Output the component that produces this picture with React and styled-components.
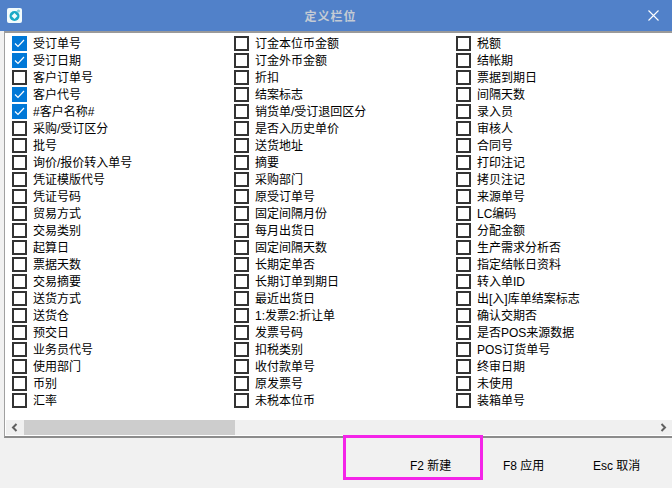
import React from "react";
import styled, { createGlobalStyle } from "styled-components";

const columns = [
  ["受订单号", "受订日期", "客户订单号", "客户代号", "#客户名称#", "采购/受订区分", "批号", "询价/报价转入单号", "凭证模版代号", "凭证号码", "贸易方式", "交易类别", "起算日", "票据天数", "交易摘要", "送货方式", "送货仓", "预交日", "业务员代号", "使用部门", "币别", "汇率"],
  ["订金本位币金额", "订金外币金额", "折扣", "结案标志", "销货单/受订退回区分", "是否入历史单价", "送货地址", "摘要", "采购部门", "原受订单号", "固定间隔月份", "每月出货日", "固定间隔天数", "长期定单否", "长期订单到期日", "最近出货日", "1:发票2:折让单", "发票号码", "扣税类别", "收付款单号", "原发票号", "未税本位币"],
  ["税额", "结帐期", "票据到期日", "间隔天数", "录入员", "审核人", "合同号", "打印注记", "拷贝注记", "来源单号", "LC编码", "分配金额", "生产需求分析否", "指定结帐日资料", "转入单ID", "出[入]库单结案标志", "确认交期否", "是否POS来源数据", "POS订货单号", "终审日期", "未使用", "装箱单号"],
];

const checked = ["受订单号", "受订日期", "客户代号", "#客户名称#"];

const GlobalStyle = createGlobalStyle`
  html, body {
    margin: 0;
    padding: 0;
    background: #f0f0f0;
  }
  body {
    font-family: "Liberation Sans", "Noto Sans CJK SC", sans-serif;
    font-size: 12px;
  }
`;

const Window = styled.div`
  position: relative;
  width: 672px;
  height: 488px;
  overflow: hidden;
  display: flex;
  flex-direction: column;
  background: #f1f1f1;
`;

const TitleBar = styled.div`
  height: 31px;
  flex: none;
  display: flex;
  align-items: center;
  justify-content: space-between;
  padding: 0 13px 0 7px;
  background: #5181c9;
`;

const Title = styled.div`
  color: #c4cbd4;
  font-size: 12px;
  font-weight: 700;
  letter-spacing: 1px;
  position: absolute;
  left: 0;
  right: 11px;
  top: 7px;
  text-align: center;
`;

const Panel = styled.div`
  margin: 0 0 0 4px;
  height: 407px;
  flex: none;
  box-sizing: border-box;
  border: 1px solid #a0a0a0;
  border-top: 2px solid #9a9a9a;
  border-bottom: 2px solid #8c8c8c;
  border-right: none;
  display: flex;
  flex-direction: column;
  background: #fff;
`;

const List = styled.div`
  flex: 1;
  display: grid;
  grid-template-columns: repeat(3, 222px);
  padding: 2px 0 0 7px;
`;

const Column = styled.div`
  display: flex;
  flex-direction: column;
`;

const Row = styled.div`
  height: 17px;
  display: flex;
  align-items: center;
  gap: 6px;
  color: #000;
  white-space: nowrap;
`;

const Label = styled.span`
  margin-bottom: 2px;
`;

const Box = styled.span`
  width: 15px;
  height: 15px;
  flex: none;
  box-sizing: border-box;
  display: flex;
  align-items: center;
  justify-content: center;
  border: ${(p) => (p.$on ? "none" : "2px solid #333")};
  background: ${(p) => (p.$on ? "#0078d7" : "#fff")};
`;

const ScrollBar = styled.div`
  height: 15px;
  flex: none;
  margin-bottom: 1px;
  margin-left: 1px;
  display: flex;
  align-items: center;
  justify-content: space-between;
  position: relative;
  background: #f0f0f0;
`;

const Arrow = styled.span`
  width: 17px;
  height: 15px;
  flex: none;
  display: flex;
  align-items: center;
  justify-content: center;
`;

const Thumb = styled.div`
  position: absolute;
  left: 18px;
  top: 0;
  width: 211px;
  height: 15px;
  background: #cdcdcd;
`;

const Footer = styled.div`
  flex: 1;
  display: flex;
  align-items: flex-start;
  padding: 18px 0 0 410px;
`;

const ActionButton = styled.div`
  width: ${(p) => p.$w}px;
  flex: none;
  color: #000;
  white-space: nowrap;
`;

const Highlight = styled.div`
  position: absolute;
  left: 343px;
  top: 435px;
  width: 140px;
  height: 45px;
  box-sizing: border-box;
  border: 3px solid #f424e8;
`;

const Check = () => (
  <svg width="11" height="9" viewBox="0 0 11 9" fill="none">
    <path d="M1 4.5 L4 7.5 L10 1" stroke="#fff" strokeWidth="1.2" />
  </svg>
);

const AppIcon = () => (
  <svg width="15" height="15" viewBox="0 0 15 15">
    <rect x="0" y="0" width="15" height="15" rx="2" fill="#f2fbfc" />
    <circle cx="7.5" cy="8" r="5" fill="#1aa9c6" />
    <path d="M7.5 5 L10.5 8 L7.5 11 L4.5 8 Z" fill="#f2fbfc" />
    <circle cx="11.5" cy="3" r="1.6" fill="#7fd0de" />
  </svg>
);

const App = () => {
  return (
    <Window>
      <GlobalStyle />
      <TitleBar>
        <AppIcon />
        <Title>定义栏位</Title>
        <svg width="11" height="11" viewBox="0 0 11 11">
          <path d="M0.5 0.5 L10.5 10.5 M10.5 0.5 L0.5 10.5" stroke="#fff" strokeWidth="1.1" />
        </svg>
      </TitleBar>
      <Panel>
        <List>
          {columns.map((items, i) => (
            <Column key={i}>
              {items.map((label) => {
                const on = checked.includes(label);
                return (
                  <Row key={label}>
                    <Box $on={on}>{on && <Check />}</Box>
                    <Label>{label}</Label>
                  </Row>
                );
              })}
            </Column>
          ))}
        </List>
        <ScrollBar>
          <Arrow>
            <svg width="7" height="9" viewBox="0 0 7 9" fill="none">
              <path d="M5.5 1 L2 4.5 L5.5 8" stroke="#606060" strokeWidth="2" />
            </svg>
          </Arrow>
          <Thumb />
          <Arrow>
            <svg width="7" height="9" viewBox="0 0 7 9" fill="none">
              <path d="M1.5 1 L5 4.5 L1.5 8" stroke="#606060" strokeWidth="2" />
            </svg>
          </Arrow>
        </ScrollBar>
      </Panel>
      <Footer>
        <ActionButton $w={93}>F2 新建</ActionButton>
        <ActionButton $w={90}>F8 应用</ActionButton>
        <ActionButton $w={46}>Esc 取消</ActionButton>
      </Footer>
      <Highlight />
    </Window>
  );
};

export default App;
